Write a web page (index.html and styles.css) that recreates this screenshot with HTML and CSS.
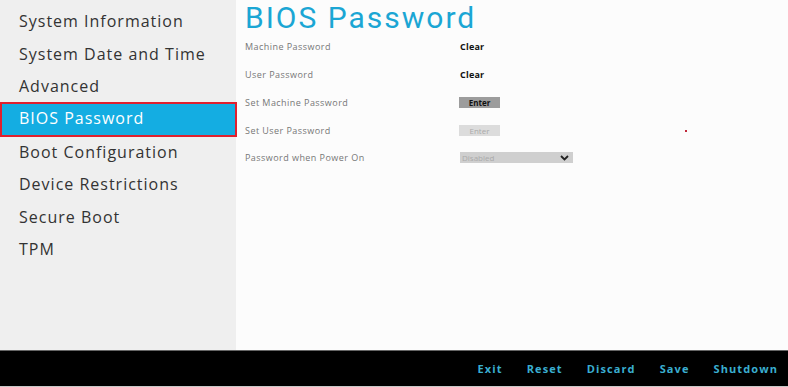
FILE: index.html
```html
<!DOCTYPE html>
<html lang="en">
<head>
    <meta charset="UTF-8" />
    <title>BIOS Password</title>
    <link rel="stylesheet" href="styles.css">
</head>
<body>
    <div class="screen">
        <nav class="sidebar">
            <div class="nav-item">System Information</div>
            <div class="nav-item">System Date and Time</div>
            <div class="nav-item">Advanced</div>
            <div class="nav-item active">BIOS Password</div>
            <div class="nav-item">Boot Configuration</div>
            <div class="nav-item">Device Restrictions</div>
            <div class="nav-item">Secure Boot</div>
            <div class="nav-item">TPM</div>
        </nav>

        <main class="content">
            <h1 class="title">BIOS Password</h1>
            <div class="rows">
                <div class="row">
                    <span class="label">Machine Password</span>
                    <span class="value">Clear</span>
                </div>
                <div class="row">
                    <span class="label">User Password</span>
                    <span class="value">Clear</span>
                </div>
                <div class="row">
                    <span class="label">Set Machine Password</span>
                    <span class="btn">Enter</span>
                </div>
                <div class="row">
                    <span class="label">Set User Password</span>
                    <span class="btn disabled">Enter</span>
                </div>
                <div class="row">
                    <span class="label">Password when Power On</span>
                    <span class="select">
                        Disabled
                        <svg width="9" height="6" viewBox="0 0 9 6"><path d="M1 1 L4.5 4.5 L8 1" fill="none" stroke="#222" stroke-width="1.8"/></svg>
                    </span>
                </div>
            </div>
            <span class="dot"></span>
        </main>
    </div>

    <footer class="footer">
        <span>Exit</span>
        <span>Reset</span>
        <span>Discard</span>
        <span>Save</span>
        <span>Shutdown</span>
    </footer>
</body>
</html>
```

FILE: styles.css
```css
* {
    box-sizing: border-box;
}

html, body {
    margin: 0;
    height: 100%;
}

body {
    font-family: "Open Sans", sans-serif;
    background: #fcfcfc;
    width: 788px;
    height: 387px;
    display: flex;
    flex-direction: column;
    overflow: hidden;
}

.screen {
    display: flex;
    height: 350px;
}

.sidebar {
    width: 236px;
    background: #efefef;
    padding-top: 5px;
}

.nav-item {
    height: 32.5px;
    line-height: 32px;
    padding-left: 19px;
    font-size: 16px;
    color: #333;
    letter-spacing: 1px;
}

.nav-item.active {
    background: #14ade2;
    color: #fff;
    border: 2px solid #e0202e;
    padding-left: 17px;
    line-height: 29px;
    height: 35px;
    margin: -1px -1px -1px 0;
}

.content {
    flex: 1;
    position: relative;
    padding-left: 9px;
}

.title {
    margin: 0;
    font-family: Roboto, sans-serif;
    font-weight: normal;
    font-size: 30px;
    color: #1ba6d4;
    line-height: normal;
    letter-spacing: 2px;
}

.rows {
    margin-top: -2px;
}

.row {
    display: flex;
    align-items: center;
    height: 27.75px;
}

.label {
    width: 214px;
    font-size: 9px;
    color: #777;
    letter-spacing: 0.45px;
}

.value {
    font-size: 9px;
    font-weight: bold;
    color: #111;
    padding-left: 1px;
    letter-spacing: 0.2px;
}

.btn {
    width: 41px;
    height: 11px;
    line-height: 11px;
    text-align: center;
    font-size: 8px;
    font-weight: bold;
    background: #9c9c9c;
    color: #111;
}

.btn.disabled {
    background: #dcdcdc;
    color: #aaa;
    font-weight: normal;
}

.select {
    display: flex;
    align-items: center;
    justify-content: space-between;
    width: 113px;
    height: 11px;
    padding: 0 4px 0 2px;
    margin-left: 1px;
    font-size: 8px;
    background: #cfcfcf;
    color: #aaa;
}

.dot {
    position: absolute;
    left: 449px;
    top: 130px;
    width: 2px;
    height: 2px;
    background: #c0283a;
}

.footer {
    height: 37px;
    background: #000;
    border-top: 1px solid #666;
    border-bottom: 1px solid #c8c8c8;
    display: flex;
    justify-content: flex-end;
    align-items: center;
    gap: 24px;
    padding-right: 10px;
    font-size: 11px;
    font-weight: bold;
    letter-spacing: 1.1px;
    color: #3aaed0;
}
```
